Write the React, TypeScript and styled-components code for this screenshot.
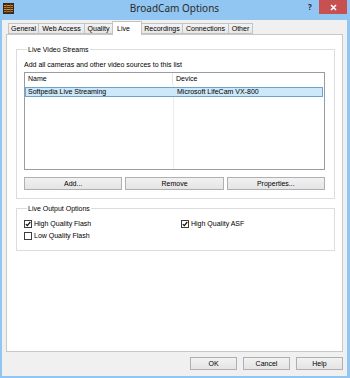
import React from 'react';
import styled, { createGlobalStyle } from 'styled-components';

const Global = createGlobalStyle`
  html, body { margin: 0; padding: 0; }
  body { width: 350px; height: 378px; overflow: hidden; background: #92c6f2; }
`;

const Window = styled.div`
  width: 350px;
  height: 378px;
  box-sizing: border-box;
  display: flex;
  flex-direction: column;
  background: #92c6f2;
  padding: 0 3px 2px 2px;
  font-family: "Liberation Sans", Arial, sans-serif;
  font-size: 7px;
  color: #000;
`;

const TitleBar = styled.div`
  height: 20px;
  display: grid;
  grid-template-columns: 1fr auto 1fr;
  align-items: start;
`;

const AppIcon = styled.div`
  margin: 3px 0 0 1px;
  width: 11px;
  height: 11px;
  display: flex;
`;

const Title = styled.div`
  font-family: "Noto Sans", "Open Sans", sans-serif;
  font-size: 10px;
  line-height: 13px;
  padding-top: 2px;
  color: #2b2b2b;
`;

const Controls = styled.div`
  display: flex;
  justify-content: flex-end;
  align-items: flex-start;
`;

const HelpGlyph = styled.div`
  font-family: "Noto Sans", sans-serif;
  font-weight: 700;
  font-size: 8px;
  line-height: 14px;
  color: #1f2a36;
  width: 10px;
  margin-right: 4px;
  text-align: center;
`;

const CloseButton = styled.div`
  width: 28px;
  height: 14px;
  background: #c75050;
  color: #fff;
  display: flex;
  align-items: center;
  justify-content: center;
`;

const Client = styled.div`
  flex: 1;
  background: #f0f0f0;
  display: flex;
  flex-direction: column;
  min-height: 0;
`;

const TabRow = styled.div`
  margin-top: 1px;
  height: 13px;
  padding-left: 6px;
  display: flex;
  align-items: flex-end;
`;

const Tab = styled.div<{ $w: number; $active?: boolean }>`
  box-sizing: border-box;
  width: ${(p) => p.$w}px;
  height: ${(p) => (p.$active ? 14 : 11)}px;
  margin-left: -1px;
  &:first-child { margin-left: 0; }
  margin-bottom: ${(p) => (p.$active ? -1 : 0)}px;
  position: relative;
  z-index: ${(p) => (p.$active ? 2 : 1)};
  border: 1px solid #c3c3c3;
  border-bottom: ${(p) => (p.$active ? 'none' : '1px solid #c3c3c3')};
  background: ${(p) => (p.$active ? '#ffffff' : 'linear-gradient(#f3f3f3, #e7e7e7)')};
  display: flex;
  align-items: ${(p) => (p.$active ? 'flex-start' : 'center')};
  justify-content: ${(p) => (p.$active ? 'flex-start' : 'center')};
  padding-left: ${(p) => (p.$active ? 4 : 0)}px;
  padding-top: ${(p) => (p.$active ? 2 : 0)}px;
  white-space: nowrap;
  line-height: 9px;
`;

const Panel = styled.div`
  flex: 1;
  margin: 0 4px;
  border: 1px solid #c8c8c8;
  background: #fff;
  padding: 10px 7px 0 9px;
  display: flex;
  flex-direction: column;
  gap: 5px;
  min-height: 0;
`;

const Group = styled.fieldset<{ $pb: number }>`
  margin: 0;
  min-width: 0;
  border: 1px solid #dcdcdc;
  padding: 0 9px ${(p) => p.$pb}px 7px;
  display: flex;
  flex-direction: column;
`;

const Legend = styled.legend`
  padding: 0 1px;
  margin-left: 3px;
  font-size: 7px;
  line-height: 9px;
`;

const Hint = styled.div`
  margin-top: 6px;
  line-height: 9px;
`;

const ListBox = styled.div`
  margin-top: 3px;
  height: 98px;
  box-sizing: border-box;
  border: 1px solid #9a9ca3;
  display: flex;
  flex-direction: column;
  background: #fff;
`;

const HeaderRow = styled.div`
  display: grid;
  grid-template-columns: 148px 1fr;
  height: 12px;
`;

const HeaderCell = styled.div<{ $divider?: boolean }>`
  padding-left: 3px;
  line-height: 12px;
  border-right: ${(p) => (p.$divider ? '1px solid #e5e5e5' : 'none')};
`;

const ListBody = styled.div`
  flex: 1;
  padding-top: 2px;
  background: linear-gradient(
    to right,
    transparent 148px,
    #ececec 148px,
    #ececec 149px,
    transparent 149px
  );
`;

const Row = styled.div<{ $selected?: boolean }>`
  display: grid;
  grid-template-columns: 148px 1fr;
  height: 10px;
  box-sizing: border-box;
  margin: 0 1px 0 0;
  background: ${(p) => (p.$selected ? '#cde8f8' : 'transparent')};
  border: 1px solid ${(p) => (p.$selected ? '#6fa3cf' : 'transparent')};
`;

const Cell = styled.div<{ $first?: boolean }>`
  padding-left: ${(p) => (p.$first ? 2 : 3)}px;
  line-height: 8px;
  white-space: nowrap;
`;

const ButtonRow = styled.div`
  margin-top: 7px;
  display: grid;
  grid-template-columns: repeat(3, 1fr);
  gap: 3px;
`;

const Button = styled.div<{ $w?: number }>`
  box-sizing: border-box;
  height: 13px;
  ${(p) => (p.$w ? `width: ${p.$w}px;` : '')}
  border: 1px solid #b0b0b0;
  background: linear-gradient(#f2f2f2, #e4e4e4);
  display: flex;
  align-items: center;
  justify-content: center;
  line-height: 9px;
`;

const CheckGrid = styled.div`
  margin-top: 6px;
  display: grid;
  grid-template-columns: 157px 1fr;
  row-gap: 3px;
`;

const CheckItem = styled.label`
  display: flex;
  align-items: center;
  gap: 2px;
  height: 9px;
  line-height: 9px;
`;

const Box = styled.span`
  box-sizing: border-box;
  width: 8px;
  height: 8px;
  border: 1px solid #3c3c3c;
  background: #fff;
  display: flex;
  align-items: center;
  justify-content: center;
`;

const Footer = styled.div`
  margin-top: 5px;
  padding: 0 4px 6px 0;
  display: flex;
  justify-content: flex-end;
  gap: 6px;
`;

const Check = ({ checked, label }: { checked?: boolean; label: string }) => (
  <CheckItem>
    <Box>
      {checked && (
        <svg width="6" height="6" viewBox="0 0 6 6">
          <polyline points="0.8,3.1 2.3,4.6 5.3,1" fill="none" stroke="#111" strokeWidth="1.2" />
        </svg>
      )}
    </Box>
    {label}
  </CheckItem>
);

const tabs: { label: string; w: number; active?: boolean }[] = [
  { label: 'General', w: 31 },
  { label: 'Web Access', w: 47 },
  { label: 'Quality', w: 29 },
  { label: 'Live', w: 30, active: true },
  { label: 'Recordings', w: 42 },
  { label: 'Connections', w: 47 },
  { label: 'Other', w: 25 },
];

export default function App() {
  return (
    <>
      <Global />
      <Window>
        <TitleBar>
          <AppIcon>
            <svg width="11" height="11" viewBox="0 0 11 11">
              <rect x="0" y="0" width="11" height="11" fill="#3b2a17" />
              <rect x="1" y="2" width="9" height="1" fill="#d98a2b" />
              <rect x="1" y="4" width="9" height="1" fill="#c47a22" />
              <rect x="1" y="6" width="9" height="1" fill="#e09a3a" />
              <rect x="1" y="8" width="9" height="1" fill="#b86e1e" />
              <rect x="3" y="1" width="1" height="9" fill="#7a4f1e" opacity="0.7" />
              <rect x="7" y="1" width="1" height="9" fill="#7a4f1e" opacity="0.7" />
            </svg>
          </AppIcon>
          <Title>BroadCam Options</Title>
          <Controls>
            <HelpGlyph>?</HelpGlyph>
            <CloseButton>
              <svg width="7" height="7" viewBox="0 0 7 7">
                <path d="M1 1 L6 6 M6 1 L1 6" stroke="#fff" strokeWidth="1.6" />
              </svg>
            </CloseButton>
          </Controls>
        </TitleBar>
        <Client>
          <TabRow>
            {tabs.map((t) => (
              <Tab key={t.label} $w={t.w} $active={t.active}>
                {t.label}
              </Tab>
            ))}
          </TabRow>
          <Panel>
            <Group $pb={8}>
              <Legend>Live Video Streams</Legend>
              <Hint>Add all cameras and other video sources to this list</Hint>
              <ListBox>
                <HeaderRow>
                  <HeaderCell $divider>Name</HeaderCell>
                  <HeaderCell>Device</HeaderCell>
                </HeaderRow>
                <ListBody>
                  <Row $selected>
                    <Cell $first>Softpedia Live Streaming</Cell>
                    <Cell>Microsoft LifeCam VX-800</Cell>
                  </Row>
                </ListBody>
              </ListBox>
              <ButtonRow>
                <Button>Add...</Button>
                <Button>Remove</Button>
                <Button>Properties...</Button>
              </ButtonRow>
            </Group>
            <Group $pb={10}>
              <Legend>Live Output Options</Legend>
              <CheckGrid>
                <Check checked label="High Quality Flash" />
                <Check checked label="High Quality ASF" />
                <Check label="Low Quality Flash" />
              </CheckGrid>
            </Group>
          </Panel>
          <Footer>
            <Button $w={47}>OK</Button>
            <Button $w={47}>Cancel</Button>
            <Button $w={47}>Help</Button>
          </Footer>
        </Client>
      </Window>
    </>
  );
}
